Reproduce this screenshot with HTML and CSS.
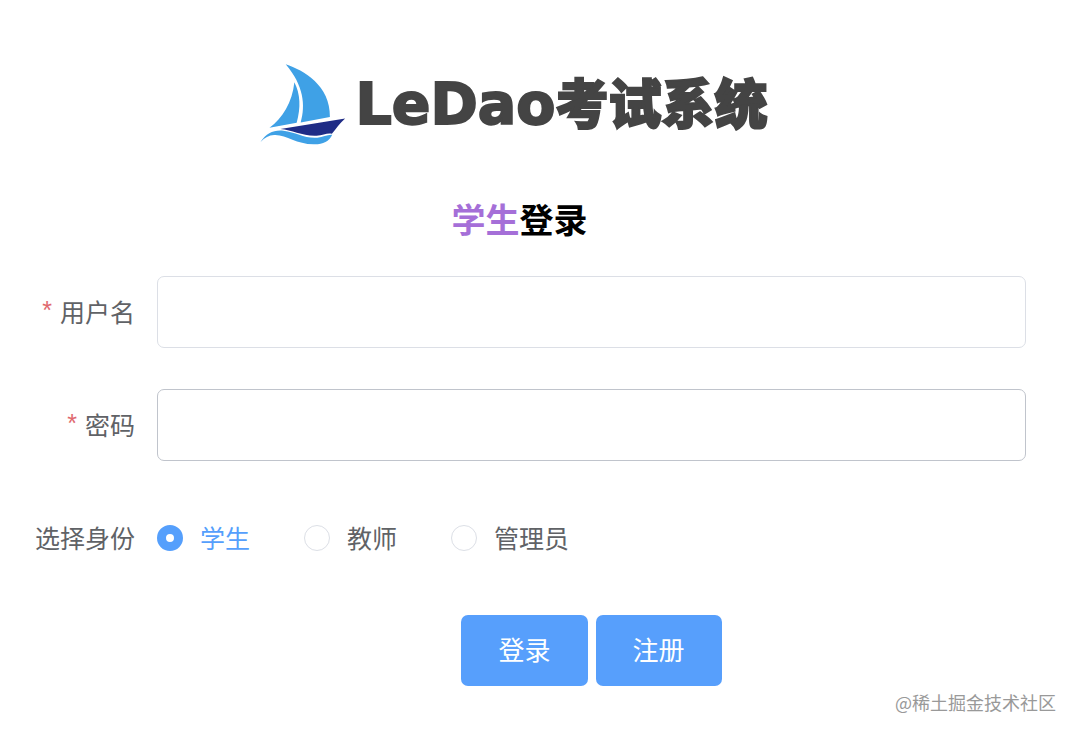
FILE: index.html
```html
<!DOCTYPE html>
<html lang="zh-CN">
<head>
  <meta charset="UTF-8" />
  <meta name="viewport" content="width=device-width, initial-scale=1.0"/>
  <title>LeDao考试系统</title>
  <link rel="stylesheet" href="styles.css">
</head>
<body>

  <main class="login">
    <div class="logo">
      <svg class="logo-boat" viewBox="29 24 258 250" aria-hidden="true">
        <!-- Sails -->
        <path fill="#3fa1e6" d="M106 28 C160 46 241 92 239 187 L151 203 C166 151 160 92 106 28 Z"/>
        <path fill="#3fa1e6" d="M132 82 C126 142 96 191 57 219 L139 204 C152 158 150 117 132 82 Z"/>
        <!-- Hull -->
        <path fill="#1f2c86" d="M90 223 L285 191 C268 205 258 222 245 237 C231 234 219 241 199 243 C157 245 126 226 90 223 Z"/>
        <!-- Wave -->
        <path fill="#3fa1e6" d="M30 262 C48 235 70 225 99 228 C137 232 163 252 201 249 C219 247 231 239 246 240 C237 261 216 270 190 269 C137 269 108 239 71 241 C55 242 43 249 30 262 Z"/>
      </svg>
      <div class="logo-text"><span class="logo-latin">LeDao</span><span class="logo-cjk">考试系统</span></div>
    </div>

    <h1><span class="role">学生</span>登录</h1>

    <form>
      <div class="form-item">
        <label class="form-label required" for="username">用户名</label>
        <input class="text-input" type="text" id="username" name="username" required>
      </div>
      <div class="form-item">
        <label class="form-label required" for="password">密码</label>
        <input class="text-input active" type="password" id="password" name="password" required>
      </div>
      <div class="form-item" role="radiogroup" aria-labelledby="identity-label">
        <span class="form-label" id="identity-label">选择身份</span>
        <div class="radios">
          <label class="radio"><input type="radio" name="identity" value="student" checked><span>学生</span></label>
          <label class="radio"><input type="radio" name="identity" value="teacher"><span>教师</span></label>
          <label class="radio"><input type="radio" name="identity" value="admin"><span>管理员</span></label>
        </div>
      </div>
      <div class="buttons">
        <button type="submit">登录</button>
        <button type="button">注册</button>
      </div>
    </form>
  </main>

  <div class="watermark">@稀土掘金技术社区</div>

</body>
</html>
```
FILE: styles.css
```css
/* Reset and base */
* { margin: 0; padding: 0; box-sizing: border-box; }
body {
  position: relative;
  min-height: 100vh;
  background: #fff;
  color: #606266;
  font-family: "Noto Sans CJK SC", sans-serif;
  font-size: 25px;
}

.login {
  padding: 60px 52px 40px 13px;
}

/* Logo */
.logo {
  display: flex;
  justify-content: center;
  align-items: center;
  gap: 10px;
  height: 88px;
  padding-right: 12px;
}
.logo-boat {
  width: 86px;
  height: 83px;
  flex-shrink: 0;
}
.logo-text {
  display: flex;
  align-items: baseline;
  padding-bottom: 4px;
  line-height: 80px;
  color: #444;
  font-weight: 900;
  white-space: nowrap;
}
.logo-latin {
  font-family: "DejaVu Sans", sans-serif;
  font-size: 57px;
  -webkit-text-stroke: 2px #444;
}
.logo-cjk {
  font-size: 53px;
  -webkit-text-stroke: 2px #444;
}

/* Title */
h1 {
  margin: 46px 0 32px;
  text-align: center;
  font-size: 34px;
  line-height: 50px;
  font-weight: bold;
  color: #000;
}
.role { color: #a56fd8; }

/* Form */
.form-item {
  display: flex;
  align-items: center;
  min-height: 72px;
  margin-bottom: 41px;
}
.form-label {
  width: 144px;
  flex-shrink: 0;
  padding-right: 22px;
  padding-bottom: 3px;
  line-height: 36px;
  text-align: right;
  white-space: nowrap;
}
.required::before {
  content: "*";
  margin-right: 8px;
  font-family: "Liberation Sans", sans-serif;
  line-height: 1;
  vertical-align: 3px;
  color: #e0696f;
}
.text-input {
  flex: 1;
  min-width: 0;
  height: 72px;
  padding: 0 26px;
  border: 1px solid #dcdfe6;
  border-radius: 7px;
  font: inherit;
  color: inherit;
  outline: none;
}
.text-input.active { border-color: #c0c4cc; }
.text-input:focus { border-color: #559ffc; }

/* Radios */
.radios {
  display: flex;
  gap: 54px;
}
.radio {
  display: flex;
  align-items: center;
  gap: 17px;
  line-height: 36px;
  cursor: pointer;
}
.radio span { padding-bottom: 3px; }
.radio input {
  appearance: none;
  width: 26px;
  height: 26px;
  border: 1px solid #dcdfe6;
  border-radius: 50%;
  background: #fff;
}
.radio input:checked { border: 9px solid #559ffc; }
.radio input:checked + span { color: #559ffc; }

/* Buttons */
.buttons {
  display: flex;
  justify-content: center;
  gap: 8px;
  margin-left: 144px;
}
button {
  height: 71px;
  padding: 0 37px 4px;
  border: none;
  border-radius: 7px;
  background: #579ffc;
  color: #fff;
  font: inherit;
  font-size: 26px;
  cursor: pointer;
}

.watermark {
  position: absolute;
  right: 22px;
  bottom: 19px;
  font-size: 18px;
  line-height: 26px;
  color: #999;
}
```
